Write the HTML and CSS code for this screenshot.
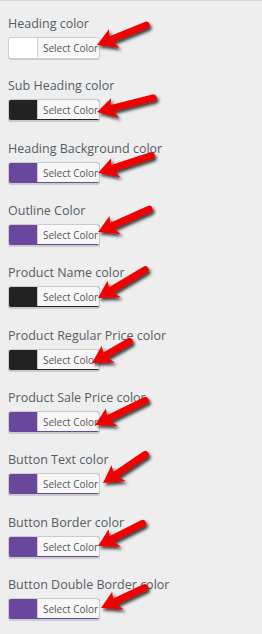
FILE: index.html
```html
<!DOCTYPE html>
<html>
<head>
<meta charset="utf-8">
<link rel="stylesheet" href="styles.css">
</head>
<body>
<div class="panel">
  <div class="field"><div class="label">Heading color</div><button class="picker c-white"><span class="txt">Select Color</span></button></div>
  <div class="field"><div class="label">Sub Heading color</div><button class="picker c-dark"><span class="txt">Select Color</span></button></div>
  <div class="field"><div class="label">Heading Background color</div><button class="picker c-purple"><span class="txt">Select Color</span></button></div>
  <div class="field"><div class="label">Outline Color</div><button class="picker c-purple"><span class="txt">Select Color</span></button></div>
  <div class="field"><div class="label">Product Name color</div><button class="picker c-dark"><span class="txt">Select Color</span></button></div>
  <div class="field"><div class="label">Product Regular Price color</div><button class="picker c-dark"><span class="txt">Select Color</span></button></div>
  <div class="field"><div class="label">Product Sale Price color</div><button class="picker c-purple"><span class="txt">Select Color</span></button></div>
  <div class="field"><div class="label">Button Text color</div><button class="picker c-purple"><span class="txt">Select Color</span></button></div>
  <div class="field"><div class="label">Button Border color</div><button class="picker c-purple"><span class="txt">Select Color</span></button></div>
  <div class="field"><div class="label">Button Double Border color</div><button class="picker c-purple"><span class="txt">Select Color</span></button></div>
</div>
<svg class="arrows" width="262" height="634" viewBox="0 0 262 634">
  <defs>
    <filter id="sh" x="-30%" y="-50%" width="160%" height="200%">
      <feDropShadow dx="2" dy="2.5" stdDeviation="1.4" flood-color="#000" flood-opacity="0.75"/>
    </filter>
  </defs>
  <g fill="#f00600" filter="url(#sh)">
    <g transform="translate(97,45) rotate(-22)"><path d="M0,0 L17,-10 L15,-3.5 L53,-3.5 A3.5,3.5 0 0 1 53,3.5 L16,3.5 L20,11 Z"/></g>
    <g transform="translate(97,112) rotate(-14)"><path d="M0,0 L17,-10 L15,-3.5 L58,-3.5 A3.5,3.5 0 0 1 58,3.5 L16,3.5 L20,11 Z"/></g>
    <g transform="translate(98,173) rotate(-18)"><path d="M0,0 L17,-10 L15,-3.5 L56,-3.5 A3.5,3.5 0 0 1 56,3.5 L16,3.5 L20,11 Z"/></g>
    <g transform="translate(98,232) rotate(-24)"><path d="M0,0 L17,-10 L15,-3.5 L56,-3.5 A3.5,3.5 0 0 1 56,3.5 L16,3.5 L20,11 Z"/></g>
    <g transform="translate(98,298) rotate(-31)"><path d="M0,0 L17,-10 L15,-3.5 L55,-3.5 A3.5,3.5 0 0 1 55,3.5 L16,3.5 L20,11 Z"/></g>
    <g transform="translate(92,363) rotate(-30)"><path d="M0,0 L17,-10 L15,-3.5 L43,-3.5 A3.5,3.5 0 0 1 43,3.5 L16,3.5 L20,11 Z"/></g>
    <g transform="translate(95,425) rotate(-26)"><path d="M0,0 L17,-10 L15,-3.5 L56,-3.5 A3.5,3.5 0 0 1 56,3.5 L16,3.5 L20,11 Z"/></g>
    <g transform="translate(103,483) rotate(-34)"><path d="M0,0 L17,-10 L15,-3.5 L51,-3.5 A3.5,3.5 0 0 1 51,3.5 L16,3.5 L20,11 Z"/></g>
    <g transform="translate(98,546) rotate(-27)"><path d="M0,0 L17,-10 L15,-3.5 L50,-3.5 A3.5,3.5 0 0 1 50,3.5 L16,3.5 L20,11 Z"/></g>
    <g transform="translate(101,608) rotate(-25)"><path d="M0,0 L17,-10 L15,-3.5 L48,-3.5 A3.5,3.5 0 0 1 48,3.5 L16,3.5 L20,11 Z"/></g>
  </g>
</svg>
</body>
</html>
```

FILE: styles.css
```css
html, body {
  margin: 0;
  padding: 0;
  background: #eeeeee;
}
body {
  position: relative;
  width: 262px;
  height: 634px;
  overflow: hidden;
  border-top: 1px solid #d6d6d6;
  box-sizing: border-box;
  font-family: "Open Sans", "Noto Sans", sans-serif;
}
.panel {
  display: flex;
  flex-direction: column;
  gap: 17.33px;
  padding: 13px 0 0 8px;
}
.field {
  display: flex;
  flex-direction: column;
  align-items: flex-start;
  gap: 3px;
}
.label {
  font-size: 12.5px;
  line-height: 20px;
  color: #555d66;
  white-space: nowrap;
}
.picker {
  display: flex;
  justify-content: flex-end;
  align-items: flex-start;
  width: 92px;
  height: 22px;
  margin: 0;
  padding: 0 0 1px 28px;
  box-sizing: border-box;
  border: 1px solid #cccccc;
  border-radius: 3px;
  box-shadow: 0 1px 0 #cccccc;
  overflow: hidden;
  font-family: inherit;
}
.c-white { background: #ffffff; }
.c-dark { background: #222222; }
.c-purple { background: #68479c; }
.txt {
  flex: 1;
  height: 100%;
  display: flex;
  align-items: center;
  padding: 1px 0 0 5px;
  box-sizing: border-box;
  background: #f7f7f7;
  border-left: 1px solid #cccccc;
  font-size: 10px;
  color: #555555;
  white-space: nowrap;
}
.arrows {
  position: absolute;
  left: 0;
  top: -1px;
}
```
